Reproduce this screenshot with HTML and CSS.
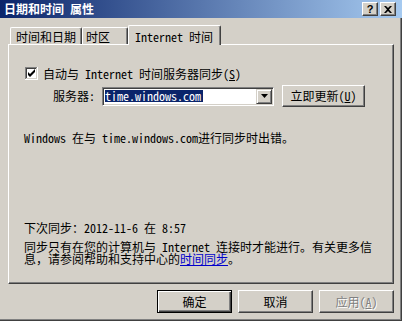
FILE: index.html
```html
<!DOCTYPE html>
<html lang="zh-CN">
<head>
<meta charset="utf-8">
<title>日期和时间 属性</title>
<link rel="stylesheet" href="styles.css">
</head>
<body>
<div class="window">
  <div class="titlebar">
    <span class="title">日期和时间 属性</span>
    <div class="tbtns">
      <span class="tbtn tbtn-help">?</span>
      <span class="tbtn">
        <svg width="8" height="7" viewBox="0 0 8 7"><path d="M0 0h2l2 2 2-2h2L5 3.5 8 7H6L4 5 2 7H0l3-3.5z" fill="#000"/></svg>
      </span>
    </div>
  </div>
  <div class="content">
    <div class="tabs">
      <div class="tab tab-date">时间和日期</div>
      <div class="tab tab-zone">时区</div>
      <div class="tab tab-active">Internet 时间</div>
    </div>
    <div class="panel">
      <div class="sync-row">
        <span class="checkbox">
          <svg width="13" height="13" viewBox="0 0 13 13">
            <rect x="0" y="0" width="13" height="13" fill="#fff"/>
            <path d="M0 0h12v1H1v11H0z" fill="#808080"/>
            <path d="M1 1h10v1H2v9H1z" fill="#404040"/>
            <path d="M12 0h1v13H0v-1h12z" fill="#fff"/>
            <path d="M11 1h1v11H1v-1h10z" fill="#D4D0C8"/>
            <path d="M3 5v3l2 2 5-5V2L5 7z" fill="#000"/>
          </svg>
        </span>
        <span>自动与 Internet 时间服务器同步(<u>S</u>)</span>
      </div>
      <div class="server-row">
        <span class="label">服务器:</span>
        <div class="combo">
          <span class="combo-text">time.windows.com</span>
          <span class="combo-btn">
            <svg width="7" height="4" viewBox="0 0 7 4"><path d="M0 0h7L3.5 4z" fill="#000"/></svg>
          </span>
        </div>
        <button class="btn btn-update">立即更新(<u>U</u>)</button>
      </div>
      <p class="error">Windows 在与 time.windows.com进行同步时出错。</p>
      <p class="next">下次同步：2012-11-6 在 8:57</p>
      <p class="note">同步只有在您的计算机与 Internet 连接时才能进行。有关更多信<br>息，请参阅帮助和支持中心的<a class="link" href="#">时间同步</a>。</p>
    </div>
    <div class="actions">
      <button class="btn btn-default">确定</button>
      <button class="btn">取消</button>
      <button class="btn btn-disabled">应用(<u>A</u>)</button>
    </div>
  </div>
</div>
</body>
</html>
```

FILE: styles.css
```css
* {
  box-sizing: border-box;
}

body {
  margin: 0;
  font-family: "Noto Sans Mono CJK SC", "Noto Sans CJK SC", monospace;
  font-size: 12px;
  line-height: 12px;
  color: #000;
}

.window {
  width: 402px;
  height: 321px;
  background: #D4D0C8;
  display: flex;
  flex-direction: column;
  box-shadow: inset -1px -1px #404040, inset -2px -2px #808080;
}

.titlebar {
  height: 18px;
  background: linear-gradient(to right, #0A246A, #A6CAF0);
  display: flex;
  align-items: center;
  justify-content: space-between;
  padding: 0 6px 0 4px;
}

.title {
  color: #fff;
  font-weight: bold;
}

.tbtns {
  display: flex;
  gap: 2px;
}

.tbtn {
  width: 16px;
  height: 14px;
  background: #D4D0C8;
  border: 1px solid;
  border-color: #fff #404040 #404040 #fff;
  box-shadow: inset -1px -1px #808080;
  display: flex;
  align-items: center;
  justify-content: center;
}

.tbtn-help {
  font-family: "Liberation Sans", sans-serif;
  font-weight: bold;
  font-size: 11px;
}

.content {
  padding: 7px 8px 0 8px;
  display: flex;
  flex-direction: column;
}

.tabs {
  display: flex;
  align-items: flex-end;
  height: 20px;
  padding-left: 2px;
  margin-bottom: -1px;
  position: relative;
  z-index: 1;
}

.tab {
  height: 17px;
  margin-bottom: 1px;
  padding-top: 3px;
  border: 1px solid;
  border-bottom: none;
  border-color: #fff #404040 #404040 #fff;
  border-radius: 2px 2px 0 0;
  box-shadow: inset -1px 0 #808080;
  background: #D4D0C8;
  white-space: nowrap;
}

.tab-date {
  width: 72px;
  padding-left: 5px;
}

.tab-zone {
  width: 46px;
  padding-left: 3px;
}

.tab-active {
  width: 93px;
  height: 20px;
  margin-bottom: 0;
  padding-top: 5px;
  padding-left: 6px;
}

.panel {
  height: 240px;
  border: 1px solid;
  border-color: #fff #404040 #404040 #fff;
  box-shadow: inset -1px -1px #808080;
  padding: 22px 0 0 15px;
}

.sync-row {
  display: flex;
  align-items: center;
  gap: 5px;
  height: 13px;
}

.checkbox {
  display: block;
  width: 13px;
  height: 13px;
  margin-left: 1px;
}

.checkbox svg {
  display: block;
}

.server-row {
  display: flex;
  align-items: center;
  height: 22px;
  margin-top: 5px;
  padding-left: 29px;
}

.label {
  width: 42px;
  margin-right: 7px;
}

.combo {
  width: 172px;
  height: 19px;
  margin-right: 8px;
  background: #fff;
  border: 1px solid;
  border-color: #808080 #fff #fff #808080;
  box-shadow: inset 1px 1px #404040, inset -1px -1px #D4D0C8;
  display: flex;
  align-items: center;
  justify-content: space-between;
  padding: 1px;
}

.combo-text {
  background: #0A246A;
  color: #fff;
  height: 12px;
  line-height: 12px;
  margin-left: 1px;
  padding-right: 2px;
}

.combo-btn {
  width: 16px;
  height: 15px;
  background: #D4D0C8;
  border: 1px solid;
  border-color: #D4D0C8 #404040 #404040 #D4D0C8;
  box-shadow: inset 1px 1px #fff, inset -1px -1px #808080;
  display: flex;
  align-items: center;
  justify-content: center;
}

.btn {
  font: inherit;
  color: #000;
  background: #D4D0C8;
  border: 1px solid;
  border-color: #fff #404040 #404040 #fff;
  box-shadow: inset -1px -1px #808080;
  padding: 0;
  width: 75px;
  height: 23px;
  display: flex;
  align-items: center;
  justify-content: center;
}

.btn-update {
  width: 83px;
  height: 22px;
}

.btn-default {
  border-color: #000;
  box-shadow: inset 1px 1px #fff, inset -1px -1px #404040, inset -2px -2px #808080;
}

.btn-disabled {
  color: #808080;
  text-shadow: 1px 1px #fff;
}

.error {
  margin: 25px 0 0 0;
}

.next {
  margin: 78px 0 0 0;
}

.note {
  margin: 7px 0 0 0;
  white-space: nowrap;
}

.link {
  display: inline-block;
  line-height: 12px;
  height: 12px;
  color: #0000CC;
  text-decoration: underline;
}

.actions {
  display: flex;
  justify-content: flex-end;
  gap: 6px;
  margin-top: 6px;
}
```
